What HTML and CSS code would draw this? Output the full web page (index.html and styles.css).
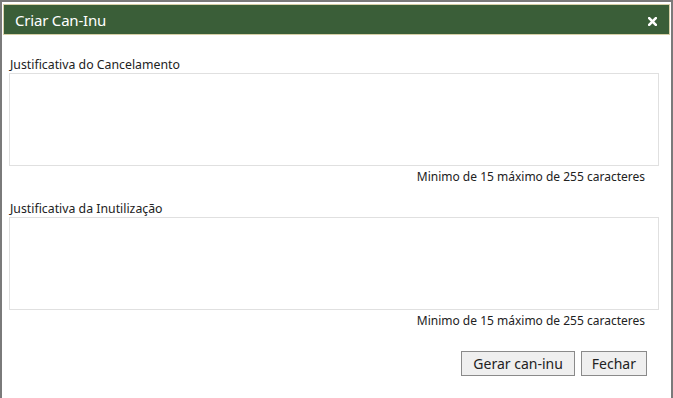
FILE: index.html
```html
<!DOCTYPE html>
<html lang="pt">
<head>
<meta charset="utf-8">
<link rel="stylesheet" href="styles.css">
</head>
<body>
<div class="dialog">
  <div class="titlebar">
    <span class="title">Criar Can-Inu</span>
    <svg class="close" width="9" height="9" viewBox="0 0 9 9"><path d="M1.2 1.2 L7.8 7.8 M7.8 1.2 L1.2 7.8" stroke="#fff" stroke-width="2.6" stroke-linecap="square"/></svg>
  </div>
  <div class="content">
    <div class="field">
      <label class="label">Justificativa do Cancelamento</label>
      <textarea class="area"></textarea>
      <div class="hint">Minimo de 15 máximo de 255 caracteres</div>
    </div>
    <div class="field">
      <label class="label">Justificativa da Inutilização</label>
      <textarea class="area"></textarea>
      <div class="hint">Minimo de 15 máximo de 255 caracteres</div>
    </div>
    <div class="actions">
      <button class="btn btn-main">Gerar can-inu</button>
      <button class="btn">Fechar</button>
    </div>
  </div>
</div>
</body>
</html>
```
FILE: styles.css
```css
html, body {
  margin: 0;
  padding: 0;
  background: #ffffff;
}
body {
  font-family: "Noto Sans", "Open Sans", sans-serif;
  color: #222;
}
.dialog {
  box-sizing: border-box;
  width: 673px;
  height: 398px;
  border-left: 2px solid #7a7a7a;
  border-top: 2px solid #7a7a7a;
  border-right: 2px solid #7a7a7a;
  padding: 2px 1px 0 1px;
  display: flex;
  flex-direction: column;
}
.titlebar {
  box-sizing: border-box;
  height: 31px;
  background: #3a5e38;
  border: 1px solid #d6cfa6;
  display: flex;
  align-items: center;
  justify-content: space-between;
  padding: 0 11px 0 11px;
}
.title {
  color: #fff;
  font-size: 15px;
  letter-spacing: -0.2px;
}
.close {
  display: block;
  margin-top: 3px;
  margin-right: 1px;
}
.content {
  padding: 22px 10px 0 6px;
  display: flex;
  flex-direction: column;
}
.field {
  display: flex;
  flex-direction: column;
  margin-bottom: 16px;
}
.label {
  font-size: 12.3px;
  line-height: 16px;
  height: 16px;
  margin-bottom: 0;
  padding-left: 1px;
}
.area {
  box-sizing: border-box;
  width: 650px;
  height: 93px;
  border: 1px solid #e0e0e0;
  resize: none;
  margin: 0;
  padding: 2px;
  font-family: inherit;
}
.hint {
  font-size: 12px;
  line-height: 16px;
  margin-top: 3px;
  text-align: right;
  padding-right: 14px;
  width: 650px;
  box-sizing: border-box;
}
.actions {
  display: flex;
  justify-content: flex-end;
  gap: 6px;
  padding-right: 13px;
  margin-top: 6px;
}
.btn {
  box-sizing: border-box;
  height: 25px;
  padding: 0 10px;
  font-family: inherit;
  font-size: 14px;
  color: #222;
  background: #efefef;
  border: 1px solid #8a8a8a;
  border-radius: 0;
}
.btn-main {
  padding: 0 11px;
}
```
